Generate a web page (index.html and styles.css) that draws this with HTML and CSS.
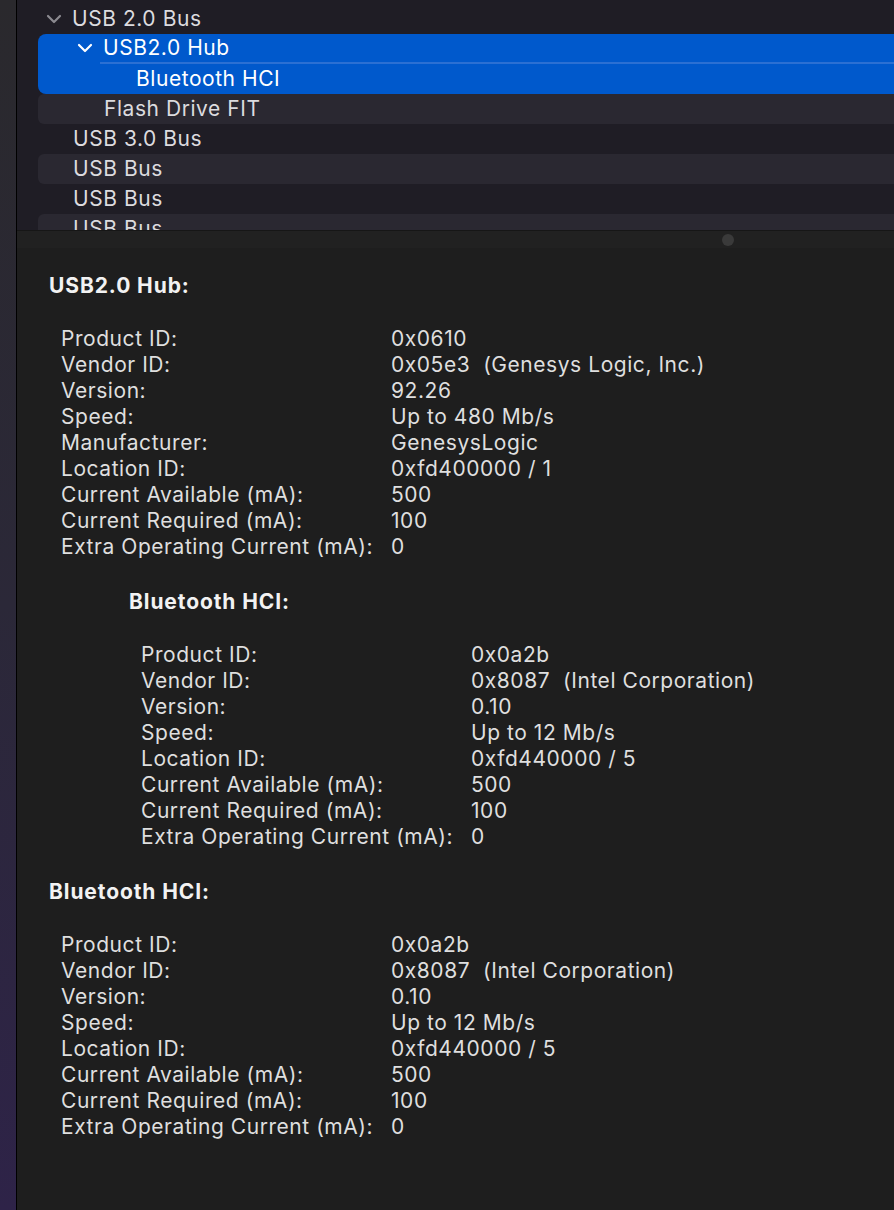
FILE: index.html
```html
<!DOCTYPE html>
<html lang="en">
  <head>
    <meta charset="utf-8" />
    <meta name="viewport" content="width=device-width, initial-scale=1" />
    <title>USB</title>
    <link rel="stylesheet" href="styles.css">
  </head>
  <body>
    <div class="desktop"></div>
    <div class="window">
      <div class="tree">
        <div class="row lv0"><span class="chev"><svg viewBox="0 0 16 10" width="16" height="10"><path d="M2 2 L8 8 L14 2" /></svg></span>USB 2.0 Bus</div>
        <div class="sel">
          <div class="row lv1"><span class="chev"><svg viewBox="0 0 16 10" width="16" height="10"><path d="M2 2 L8 8 L14 2" /></svg></span>USB2.0 Hub</div>
          <div class="row lv2">Bluetooth HCI</div>
        </div>
        <div class="row lv1 alt">Flash Drive FIT</div>
        <div class="row lv0">USB 3.0 Bus</div>
        <div class="row lv0 alt">USB Bus</div>
        <div class="row lv0">USB Bus</div>
        <div class="row lv0 alt">USB Bus</div>
      </div>
      <div class="split"><span class="knob"></span></div>
      <div class="detail">
        <h2>USB2.0 Hub:</h2>
        <dl>
          <dt>Product ID:</dt><dd>0x0610</dd>
          <dt>Vendor ID:</dt><dd>0x05e3  (Genesys Logic, Inc.)</dd>
          <dt>Version:</dt><dd>92.26</dd>
          <dt>Speed:</dt><dd>Up to 480 Mb/s</dd>
          <dt>Manufacturer:</dt><dd>GenesysLogic</dd>
          <dt>Location ID:</dt><dd>0xfd400000 / 1</dd>
          <dt>Current Available (mA):</dt><dd>500</dd>
          <dt>Current Required (mA):</dt><dd>100</dd>
          <dt>Extra Operating Current (mA):</dt><dd>0</dd>
        </dl>
        <div class="nested">
          <h2>Bluetooth HCI:</h2>
          <dl>
            <dt>Product ID:</dt><dd>0x0a2b</dd>
            <dt>Vendor ID:</dt><dd>0x8087  (Intel Corporation)</dd>
            <dt>Version:</dt><dd>0.10</dd>
            <dt>Speed:</dt><dd>Up to 12 Mb/s</dd>
            <dt>Location ID:</dt><dd>0xfd440000 / 5</dd>
            <dt>Current Available (mA):</dt><dd>500</dd>
            <dt>Current Required (mA):</dt><dd>100</dd>
            <dt>Extra Operating Current (mA):</dt><dd>0</dd>
          </dl>
        </div>
        <h2>Bluetooth HCI:</h2>
        <dl>
          <dt>Product ID:</dt><dd>0x0a2b</dd>
          <dt>Vendor ID:</dt><dd>0x8087  (Intel Corporation)</dd>
          <dt>Version:</dt><dd>0.10</dd>
          <dt>Speed:</dt><dd>Up to 12 Mb/s</dd>
          <dt>Location ID:</dt><dd>0xfd440000 / 5</dd>
          <dt>Current Available (mA):</dt><dd>500</dd>
          <dt>Current Required (mA):</dt><dd>100</dd>
          <dt>Extra Operating Current (mA):</dt><dd>0</dd>
        </dl>
      </div>
    </div>
  </body>
</html>
```

FILE: styles.css
```css
html, body {
  height: 100%;
}
body {
  margin: 0;
  display: flex;
  background: #1e1e1e;
  font-family: Inter, "Noto Sans", sans-serif;
  font-size: 21px;
  letter-spacing: 0.55px;
  overflow: hidden;
}
.desktop {
  width: 16px;
  flex-shrink: 0;
  background: linear-gradient(#2a292d, #2b2838 50%, #2e2348);
  border-right: 1px solid #000;
}
.window {
  flex: 1;
  display: flex;
  flex-direction: column;
  min-width: 0;
}
.tree {
  height: 226px;
  padding-top: 4px;
  background: #1f1d25;
  overflow: hidden;
  flex-shrink: 0;
}
.row {
  height: 30px;
  line-height: 30px;
  margin-left: 21px;
  color: #dcdbdf;
  display: flex;
  align-items: center;
  white-space: nowrap;
}
.row.alt {
  background: #2a2831;
  border-radius: 6px 0 0 6px;
}
.lv0 { padding-left: 35px; }
.lv1 { padding-left: 66px; }
.lv2 { padding-left: 98px; }
.chev {
  width: 26px;
  margin-left: -27px;
  display: flex;
  align-items: center;
}
.chev svg {
  fill: none;
  stroke: #8b8a90;
  stroke-width: 2.2;
  stroke-linecap: round;
  stroke-linejoin: round;
}
.sel {
  margin-left: 21px;
  background: #0059cc;
  border-radius: 8px 0 0 8px;
}
.sel .row {
  margin-left: 0;
  color: #fff;
}
.sel .lv1 {
  height: 28px;
  margin-bottom: 2px;
  position: relative;
}
.sel .lv1::before {
  content: "";
  position: absolute;
  left: 62px;
  right: 0;
  bottom: -2px;
  height: 2px;
  background: #2b70d3;
}
.sel .chev svg {
  stroke: #fff;
}
.split {
  height: 17px;
  flex-shrink: 0;
  background: #212121;
  border-top: 1px solid #161616;
  display: flex;
  align-items: center;
  padding-left: 705px;
}
.knob {
  width: 12px;
  height: 12px;
  border-radius: 50%;
  background: #3a3a3a;
}
.detail {
  flex: 1;
  padding: 25px 0 0 32px;
  color: #dfdfdf;
}
h2 {
  margin: 0 0 27px;
  font-size: 21px;
  line-height: 26px;
  font-weight: 700;
  letter-spacing: 0.9px;
  color: #f2f2f2;
}
dl {
  margin: 0 0 29px 12px;
  display: grid;
  grid-template-columns: 330px 1fr;
  line-height: 26px;
}
dt, dd {
  margin: 0;
  white-space: pre;
}
.nested {
  margin-left: 80px;
}
.nested dl {
  margin-bottom: 29px;
}
```
